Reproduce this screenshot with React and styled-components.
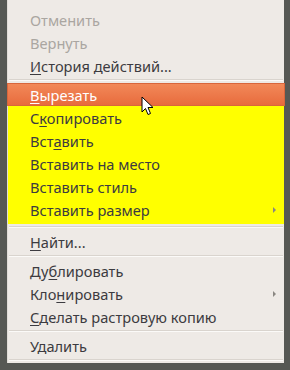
import styled, { createGlobalStyle } from "styled-components";

const GlobalStyle = createGlobalStyle`
  html, body {
    margin: 0;
    padding: 0;
    background: #565854;
  }
  body {
    font-family: "Noto Sans", "DejaVu Sans", sans-serif;
    font-size: 14.6px;
  }
`;

const Screen = styled.div`
  width: 290px;
  height: 370px;
  background: #565854;
  overflow: hidden;
`;

const Menu = styled.ul`
  position: relative;
  list-style: none;
  margin: 0 0 0 7px;
  padding: 8px 0 0;
  width: 277px;
  background: #eeeae6;
  border-left: 1px solid #e0dcd7;
  box-sizing: border-box;
`;

const Group = styled.div`
  background: #ffff00;
  padding-bottom: 3px;
`;

const Item = styled.li`
  display: flex;
  align-items: center;
  justify-content: space-between;
  height: 23px;
  padding: 0 8px 0 22px;
  box-sizing: border-box;
  color: ${(p) => (p.$disabled ? "#aaa6a1" : p.$active ? "#ffffff" : "#3c3b40")};
  white-space: nowrap;
  ${(p) =>
    p.$active &&
    `
    background: linear-gradient(#f28959, #e86b3d);
    border: 1px solid #d8663c;
    margin: 0 -1px 0 -1px;
    padding-left: 22px;
  `}

  u {
    text-decoration-thickness: 1px;
    text-underline-offset: 2px;
  }
`;

const SubArrow = styled.span`
  width: 0;
  height: 0;
  border-top: 3px solid transparent;
  border-bottom: 3px solid transparent;
  border-left: 3px solid #8a8782;
`;

const Separator = styled.li`
  height: 6px;
  display: flex;
  flex-direction: column;
  justify-content: center;
  padding: 0 1px;

  &::before {
    content: "";
    height: 1px;
    background: #d9d4ce;
  }
  &::after {
    content: "";
    height: 1px;
    background: #fbfaf8;
  }
`;

const Cursor = styled.svg`
  position: absolute;
  left: 133px;
  top: 96px;
`;

export default function App() {
  return (
    <Screen>
      <GlobalStyle />
      <Menu>
        <Item $disabled>Отменить</Item>
        <Item $disabled>Вернуть</Item>
        <Item>
          <span>
            <u>И</u>стория действий...
          </span>
        </Item>
        <Separator />
        <Item $active>
          <span>
            <u>В</u>ырезать
          </span>
        </Item>
        <Group>
          <Item>
            <span>
              С<u>к</u>опировать
            </span>
          </Item>
          <Item>
            <span>
              Вст<u>а</u>вить
            </span>
          </Item>
          <Item>Вставить на место</Item>
          <Item>Вставить стиль</Item>
          <Item>
            <span>Вставить размер</span>
            <SubArrow />
          </Item>
        </Group>
        <Separator />
        <Item>
          <span>
            <u>Н</u>айти...
          </span>
        </Item>
        <Separator />
        <Item>
          <span>
            Ду<u>б</u>лировать
          </span>
        </Item>
        <Item>
          <span>
            Кло<u>н</u>ировать
          </span>
          <SubArrow />
        </Item>
        <Item>
          <span>
            <u>С</u>делать растровую копию
          </span>
        </Item>
        <Separator />
        <Item>Удалить</Item>
        <Separator />
        <Cursor width="13" height="20" viewBox="0 0 13 20">
          <path
            d="M1 1 L1 16 L4.5 12.5 L7 18.5 L9.5 17.5 L7 11.5 L12 11.5 Z"
            fill="#ffffff"
            stroke="#000000"
            strokeWidth="1"
            strokeLinejoin="round"
          />
        </Cursor>
      </Menu>
    </Screen>
  );
}
